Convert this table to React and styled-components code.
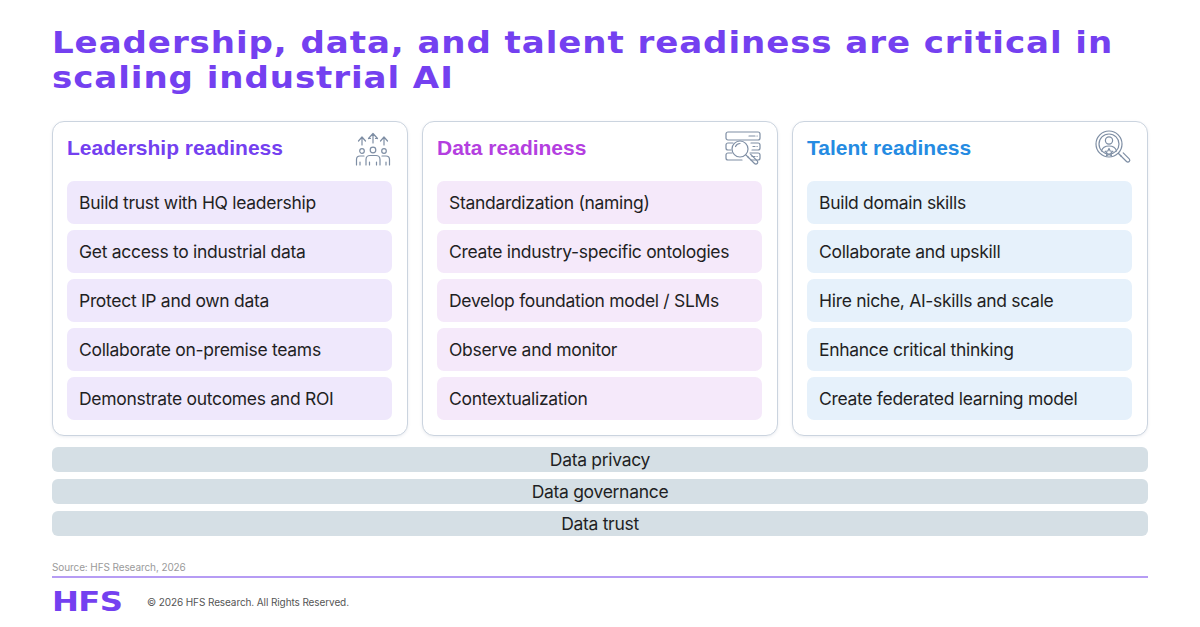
import React from "react";
import styled, { createGlobalStyle } from "styled-components";

const Global = createGlobalStyle`
  * { box-sizing: border-box; }
  html, body { margin: 0; padding: 0; background: #fff; overflow: hidden; }
  body { font-family: Inter, "Liberation Sans", Arial, sans-serif; color: #1f1f24; }
`;

const Page = styled.div`
  width: 1200px;
  height: 627px;
  padding: 25px 52px 0 52px;
  display: flex;
  flex-direction: column;
`;

const Title = styled.h1`
  margin: 0;
  align-self: flex-start;
  width: max-content;
  font-family: "DejaVu Sans", sans-serif;
  font-weight: 700;
  font-size: 30px;
  line-height: 35px;
  letter-spacing: 0.8px;
  color: #7440f0;
  white-space: nowrap;
  transform: scaleX(1.136);
  transform-origin: left top;
`;

const Cards = styled.div`
  margin-top: 26px;
  display: grid;
  grid-template-columns: repeat(3, 1fr);
  gap: 14px;
`;

const Card = styled.div`
  border: 1px solid #cbd4df;
  border-radius: 12px;
  background: #fff;
  box-shadow: 0 1px 3px rgba(90, 110, 140, 0.12);
  padding: 9px 15px 15px 14px;
  display: flex;
  flex-direction: column;
`;

const CardHead = styled.div`
  display: flex;
  align-items: center;
  justify-content: space-between;
  height: 34px;
  margin-bottom: 16px;
`;

const CardTitle = styled.h2`
  margin: 0;
  font-family: "Liberation Sans", Arial, sans-serif;
  font-weight: 700;
  font-size: 21px;
  color: ${(p) => p.$color};
`;

const Items = styled.div`
  display: flex;
  flex-direction: column;
  gap: 6px;
`;

const Item = styled.div`
  height: 43px;
  border-radius: 7px;
  background: ${(p) => p.$bg};
  display: flex;
  align-items: center;
  padding-left: 12px;
  font-size: 17.5px;
  letter-spacing: -0.3px;
  color: #1f1f24;
`;

const Bars = styled.div`
  margin-top: 11px;
  display: flex;
  flex-direction: column;
  gap: 7px;
`;

const Bar = styled.div`
  height: 25px;
  border-radius: 6px;
  background: #d5dfe5;
  display: flex;
  align-items: center;
  justify-content: center;
  font-size: 17.5px;
  letter-spacing: -0.3px;
  color: #1f1f24;
`;

const Source = styled.div`
  margin-top: 25px;
  font-size: 10px;
  color: #9a9a9a;
  letter-spacing: -0.1px;
`;

const Rule = styled.div`
  margin-top: 3px;
  height: 2px;
  background: #b69cf4;
`;

const Footer = styled.div`
  margin-top: 13px;
  display: flex;
  align-items: center;
  gap: 24px;
`;

const Logo = styled.div`
  font-family: "DejaVu Sans", sans-serif;
  font-weight: 700;
  font-size: 26px;
  line-height: 22px;
  letter-spacing: -0.5px;
  color: #7440f0;
  transform: scaleX(1.24);
  transform-origin: left center;
  width: 71px;
`;

const Copy = styled.div`
  font-size: 10px;
  color: #555;
  letter-spacing: -0.1px;
`;

const IconWrap = styled.div`
  width: 38px;
  height: 38px;
  display: flex;
  align-items: center;
  justify-content: center;
  color: #7e8ea4;
`;

const LeaderIcon = () => (
  <svg width="38" height="38" viewBox="0 0 38 38" fill="none" stroke="currentColor" strokeWidth="1.2" strokeLinecap="round" strokeLinejoin="round">
    <path d="M19 14V5M14.5 9.5L19 4.5L23.5 9.5M16.5 9.5H14.5M21.5 9.5H23.5" />
    <path d="M8 16V9M4.5 12L8 8L11.5 12" />
    <path d="M30 16V9M26.5 12L30 8L33.5 12" />
    <circle cx="19" cy="21" r="2.8" />
    <circle cx="8" cy="22" r="2.3" />
    <circle cx="30" cy="22" r="2.3" />
    <path d="M12 36V30.5C12 28 14 26.5 16 26.5H22C24 26.5 26 28 26 30.5V36" />
    <path d="M2.5 36V30.5C2.5 28.5 4 27 6 27H10" />
    <path d="M35.5 36V30.5C35.5 28.5 34 27 32 27H28" />
    <path d="M15.5 33V36M22.5 33V36M6 33V36M32 33V36" />
  </svg>
);

const DataIcon = () => (
  <svg width="38" height="38" viewBox="0 0 38 38" fill="none" stroke="currentColor" strokeWidth="1.2" strokeLinecap="round" strokeLinejoin="round">
    <rect x="2" y="3" width="34" height="8" rx="2" />
    <path d="M9 14H4C2.9 14 2 14.9 2 16V19C2 20.1 2.9 21 4 21H7" />
    <path d="M27 14H34C35.1 14 36 14.9 36 16V19C36 20.1 35.1 21 34 21H28" />
    <path d="M8 24H4C2.9 24 2 24.9 2 26V29C2 30.1 2.9 31 4 31H18" />
    <path d="M26 24H34C35.1 24 36 24.9 36 26V29C36 30.1 35.1 31 34 31H27" />
    <path d="M25 7H31M33 7H33.2M29 17.5H31M33 17.5H33.2M28 27.5H31M33 27.5H33.2" />
    <circle cx="16" cy="20" r="8" />
    <path d="M11.5 17.5C12.5 15.5 14.5 14.5 16 14.5" />
    <path d="M21.8 25.8L24.5 28.5" />
    <path d="M24 28L30.5 34.5C31.3 35.3 32.5 35.3 33.2 34.5C33.9 33.8 33.9 32.6 33.2 31.9L26.7 25.4" />
  </svg>
);

const TalentIcon = () => (
  <svg width="38" height="38" viewBox="0 0 38 38" fill="none" stroke="currentColor" strokeWidth="1.2" strokeLinecap="round" strokeLinejoin="round">
    <circle cx="15" cy="15" r="13" />
    <circle cx="15" cy="15" r="10" />
    <circle cx="15" cy="11.5" r="3.6" />
    <path d="M7.5 22C8.5 18.5 11.5 17 15 17C18.5 17 21.5 18.5 22.5 22" />
    <path d="M15 19.5L16.2 22L18.9 22.3L16.9 24.1L17.5 26.8L15 25.4L12.5 26.8L13.1 24.1L11.1 22.3L13.8 22Z" />
    <path d="M24.5 24.5L27 27" />
    <path d="M26.5 26.5L32.5 32.5C33.3 33.3 34.5 33.3 35.2 32.5C35.9 31.8 35.9 30.6 35.2 29.9L29.2 23.9" />
  </svg>
);

const columns = [
  {
    title: "Leadership readiness",
    color: "#7440f0",
    bg: "#efe8fc",
    Icon: LeaderIcon,
    items: [
      "Build trust with HQ leadership",
      "Get access to industrial data",
      "Protect IP and own data",
      "Collaborate on-premise teams",
      "Demonstrate outcomes and ROI",
    ],
  },
  {
    title: "Data readiness",
    color: "#b43fe0",
    bg: "#f5e9fa",
    Icon: DataIcon,
    items: [
      "Standardization (naming)",
      "Create industry-specific ontologies",
      "Develop foundation model / SLMs",
      "Observe and monitor",
      "Contextualization",
    ],
  },
  {
    title: "Talent readiness",
    color: "#258be2",
    bg: "#e6f1fb",
    Icon: TalentIcon,
    items: [
      "Build domain skills",
      "Collaborate and upskill",
      "Hire niche, AI-skills and scale",
      "Enhance critical thinking",
      "Create federated learning model",
    ],
  },
];

export default function App() {
  return (
    <>
      <Global />
      <Page>
        <Title>
          Leadership, data, and talent readiness are critical in
          <br />
          scaling industrial AI
        </Title>
        <Cards>
          {columns.map(({ title, color, bg, Icon, items }) => (
            <Card key={title}>
              <CardHead>
                <CardTitle $color={color}>{title}</CardTitle>
                <IconWrap>
                  <Icon />
                </IconWrap>
              </CardHead>
              <Items>
                {items.map((t) => (
                  <Item key={t} $bg={bg}>
                    {t}
                  </Item>
                ))}
              </Items>
            </Card>
          ))}
        </Cards>
        <Bars>
          <Bar>Data privacy</Bar>
          <Bar>Data governance</Bar>
          <Bar>Data trust</Bar>
        </Bars>
        <Source>Source: HFS Research, 2026</Source>
        <Rule />
        <Footer>
          <Logo>HFS</Logo>
          <Copy>© 2026 HFS Research. All Rights Reserved.</Copy>
        </Footer>
      </Page>
    </>
  );
}
